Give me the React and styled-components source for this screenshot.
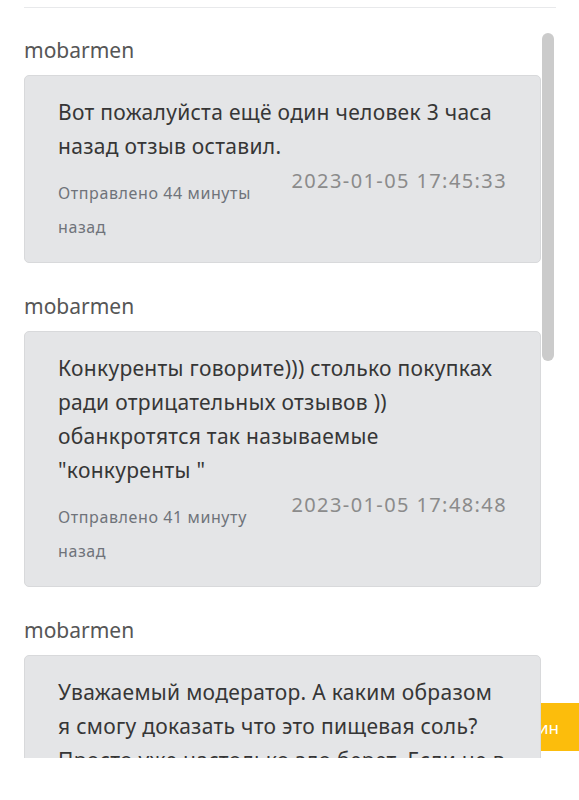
import React from 'react';
import styled, { createGlobalStyle } from 'styled-components';

const GlobalStyle = createGlobalStyle`
  html, body {
    margin: 0;
    padding: 0;
    background: #fff;
  }
  body {
    font-family: "Noto Sans", "Open Sans", sans-serif;
  }
`;

const Page = styled.div`
  position: relative;
  width: 579px;
  height: 758px;
  overflow: hidden;
  background: #fff;
`;

const Divider = styled.div`
  margin: 7px 23px 0 24px;
  height: 1px;
  background: #e8e9eb;
`;

const ChatArea = styled.div`
  display: flex;
  gap: 1px;
  margin-top: 25px;
  padding-left: 24px;
  position: relative;
  z-index: 1;
`;

const List = styled.div`
  width: 517px;
  padding-top: 2px;
`;

const Track = styled.div`
  width: 12px;
  flex-shrink: 0;
`;

const Thumb = styled.div`
  height: 328px;
  border-radius: 6px;
  background: #cbcbcb;
`;

const Item = styled.div`
  margin-bottom: 28px;
`;

const Author = styled.div`
  font-size: 21px;
  line-height: 30px;
  color: #565656;
  margin-bottom: 10px;
`;

const Card = styled.div`
  background: #e4e5e7;
  border: 1px solid #d8d9db;
  border-radius: 5px;
  padding: 19px 33px 18px 33px;
`;

const Text = styled.div`
  font-size: 21px;
  line-height: 34px;
  letter-spacing: 0.3px;
  color: #363636;
`;

const Footer = styled.div`
  display: flex;
`;

const Ago = styled.div`
  flex: 1;
  margin-top: 13px;
  font-size: 16px;
  line-height: 34px;
  letter-spacing: 0.6px;
  color: #6f737a;
`;

const Stamp = styled.div`
  flex: 1;
  padding-top: 1px;
  text-align: right;
  font-size: 20px;
  line-height: 34px;
  letter-spacing: 1.4px;
  color: #8b8b8b;
`;

const AdminButton = styled.div`
  position: absolute;
  top: 703px;
  right: 0;
  height: 48px;
  padding: 0 20px;
  display: flex;
  align-items: center;
  background: #fcbd0c;
  color: #fff;
  font-size: 17px;
  z-index: 0;
`;

const messages = [
  {
    author: 'mobarmen',
    text: 'Вот пожалуйста ещё один человек 3 часа назад отзыв оставил.',
    ago: 'Отправлено 44 минуты назад',
    date: '2023-01-05 17:45:33',
  },
  {
    author: 'mobarmen',
    text: 'Конкуренты говорите))) столько покупках ради отрицательных отзывов )) обанкротятся так называемые "конкуренты "',
    ago: 'Отправлено 41 минуту назад',
    date: '2023-01-05 17:48:48',
  },
  {
    author: 'mobarmen',
    text: 'Уважаемый модератор. А каким образом я смогу доказать что это пищевая соль? Просто уже настолько зло берет. Если не в состоянии разобраться, зачем писать такое?',
    ago: 'Отправлено 39 минут назад',
    date: '2023-01-05 17:50:12',
  },
];

const Message = ({ message }) => (
  <Item>
    <Author>{message.author}</Author>
    <Card>
      <Text>{message.text}</Text>
      <Footer>
        <Ago>{message.ago}</Ago>
        <Stamp>{message.date}</Stamp>
      </Footer>
    </Card>
  </Item>
);

const App = () => (
  <Page>
    <GlobalStyle />
    <Divider />
    <AdminButton>Админ</AdminButton>
    <ChatArea>
      <List>
        {messages.map((m, i) => (
          <Message key={i} message={m} />
        ))}
      </List>
      <Track>
        <Thumb />
      </Track>
    </ChatArea>
  </Page>
);

export default App;
